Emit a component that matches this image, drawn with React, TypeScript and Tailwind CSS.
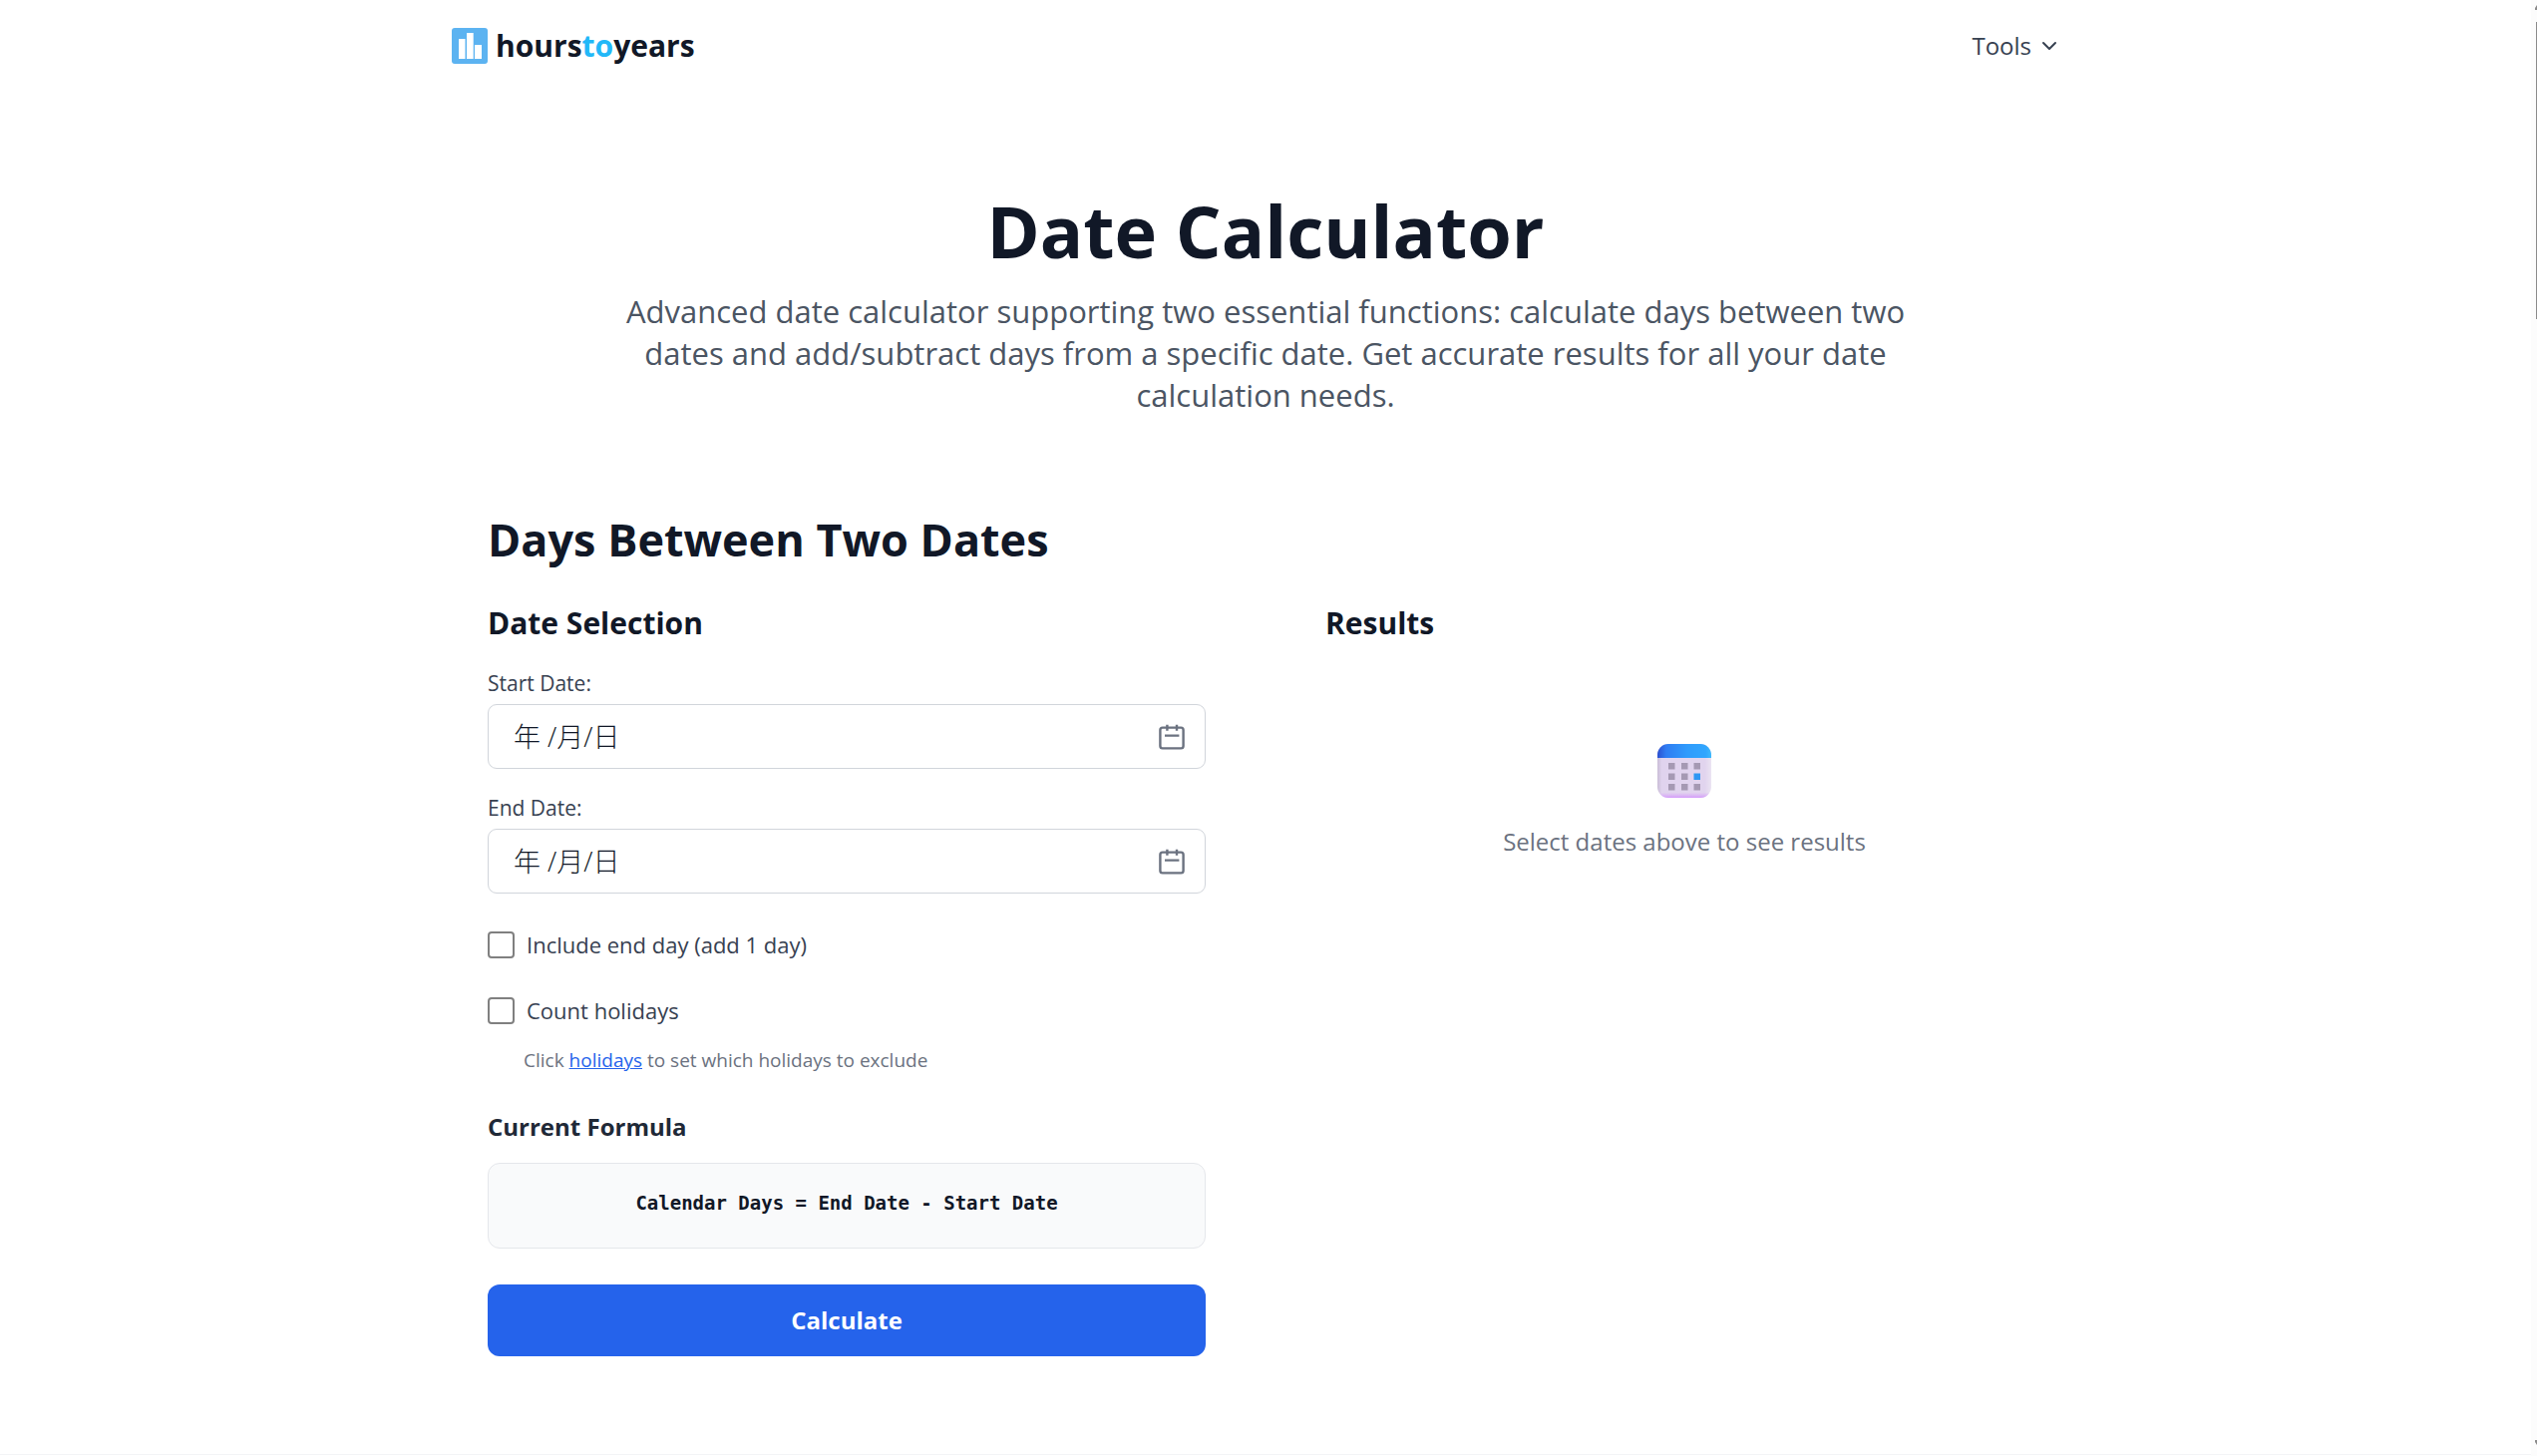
import { useState } from 'react'
import { ChevronDown } from 'lucide-react'

const LogoIcon = () => (
    <svg width="36" height="36" viewBox="0 0 36 36" aria-hidden="true">
        <rect width="36" height="36" rx="3" fill="#5cb3f1" />
        <rect x="7" y="11" width="6.5" height="20" fill="#fff" />
        <rect x="15" y="5" width="6.7" height="26" fill="#fff" />
        <rect x="23" y="17" width="7" height="14" fill="#fff" />
    </svg>
)

const DateFieldIcon = () => (
    <svg width="26" height="26" viewBox="0 0 26 26" fill="none" stroke="#6b7280" strokeWidth="2.4" aria-hidden="true">
        <rect x="1.4" y="3.6" width="23.2" height="20.8" rx="2.4" />
        <path d="M8.4 0.8v6M18 0.8v6M6 11.6h14.4" />
    </svg>
)

const dots = [
    [11, 19], [24, 19], [36.5, 19],
    [11, 29.5], [24, 29.5],
    [11, 40], [24, 40], [36.5, 40],
]

const CalendarIcon = () => (
    <svg width="54" height="54" viewBox="0 0 54 54" aria-hidden="true">
        <defs>
            <linearGradient id="page" x1="0" x2="1" y1="0" y2="0">
                <stop offset="0" stopColor="#c9bdd6" />
                <stop offset="0.08" stopColor="#e0d3ee" />
                <stop offset="0.88" stopColor="#e1d4ee" />
                <stop offset="1" stopColor="#ebe4f2" />
            </linearGradient>
            <linearGradient id="glow" x1="0" x2="0" y1="0" y2="1">
                <stop offset="0.9" stopColor="#d9a8f8" stopOpacity="0" />
                <stop offset="1" stopColor="#d49bfa" />
            </linearGradient>
            <linearGradient id="head" x1="0" x2="1" y1="0" y2="0">
                <stop offset="0" stopColor="#2c4fd0" />
                <stop offset="0.16" stopColor="#2f7cf2" />
                <stop offset="0.55" stopColor="#2f9bfc" />
                <stop offset="0.9" stopColor="#30a6fe" />
                <stop offset="1" stopColor="#3fb9fb" />
            </linearGradient>
            <clipPath id="sheet">
                <rect width="54" height="54" rx="11" />
            </clipPath>
        </defs>
        <g clipPath="url(#sheet)">
            <rect width="54" height="54" fill="url(#page)" />
            <rect width="54" height="54" fill="url(#glow)" />
            <rect width="54" height="14" fill="url(#head)" />
        </g>
        {dots.map(([x, y]) => (
            <rect key={`${x}-${y}`} x={x} y={y} width="6.5" height="6.5" fill="#a599b3" />
        ))}
        <rect x="36.5" y="29.5" width="6.5" height="6.5" fill="#2f97f3" />
    </svg>
)

const Header = () => (
    <header className="mx-auto flex w-full max-w-[1632px] items-center justify-between py-7 pr-[18px]">
        <a href="#" className="flex items-center gap-2">
            <LogoIcon />
            <span className="text-[30px] leading-9 font-bold text-[#111827]">
                hours<span className="text-[#22b8f8]">to</span>years
            </span>
        </a>
        <button type="button" className="flex items-center gap-1.5 text-2xl leading-9 text-[#374151]">
            Tools
            <ChevronDown size={24} strokeWidth={2} />
        </button>
    </header>
)

const DateField = ({ id, label }: { id: string; label: string }) => {
    const [value, setValue] = useState('年 /月/日')

    return (
        <div>
            <label htmlFor={id} className="mb-1.5 block text-[21px] leading-[30px] text-[#374151]">{label}</label>
            <div className="flex h-[65px] items-center rounded-[9px] border border-[#d1d5db] pr-5 pl-[25px]">
                <input
                    id={id}
                    type="text"
                    value={value}
                    onChange={(e) => setValue(e.target.value)}
                    className="min-w-0 flex-1 pt-0.5 text-[27px] font-light text-[#111827] outline-none"
                />
                <DateFieldIcon />
            </div>
        </div>
    )
}

const CheckField = ({ label }: { label: string }) => (
    <label className="flex items-center gap-3 text-[22px] leading-[33px] text-[#374151]">
        <input type="checkbox" className="size-[27px] appearance-none rounded-[4px] border-2 border-[#808080] bg-white checked:bg-[#2563eb]" />
        {label}
    </label>
)

const Calculator = () => (
    <section className="mx-auto mt-[97px] w-full max-w-[1560px]">
        <h2 className="text-[45px] leading-[54px] font-bold text-[#111827]">Days Between Two Dates</h2>
        <div className="mt-9 grid grid-cols-2 gap-[120px]">
            <form onSubmit={(e) => e.preventDefault()}>
                <h3 className="text-[30px] leading-[42px] font-bold text-[#111827]">Date Selection</h3>
                <div className="mt-6 flex flex-col gap-6">
                    <DateField id="start-date" label="Start Date:" />
                    <DateField id="end-date" label="End Date:" />
                </div>
                <div className="mt-[35px] flex flex-col gap-[33px]">
                    <CheckField label="Include end day (add 1 day)" />
                    <CheckField label="Count holidays" />
                </div>
                <p className="mt-[21px] pl-9 text-[19px] leading-6 text-[#6b7280]">
                    Click <a href="#" className="text-[#2563eb] underline">holidays</a> to set which holidays to exclude
                </p>
                <h4 className="mt-[37px] text-2xl leading-9 font-bold text-[#1f2937]">Current Formula</h4>
                <div className="mt-[18px] rounded-xl border border-[#e5e7eb] bg-[#f9fafb] px-6 pt-6 pb-[30px] text-center">
                    <code className="block font-['DejaVu_Sans_Mono',monospace] text-[19px] leading-[30px] font-bold text-[#111827]">
                        Calendar Days = End Date - Start Date
                    </code>
                </div>
                <button type="submit" className="mt-9 h-[72px] w-full rounded-xl bg-[#2563eb] text-2xl font-bold text-white">
                    Calculate
                </button>
            </form>
            <div>
                <h3 className="text-[30px] leading-[42px] font-bold text-[#111827]">Results</h3>
                <div className="mt-[100px] flex flex-col items-center gap-[26px]">
                    <CalendarIcon />
                    <p className="text-2xl leading-9 text-[#6b7280]">Select dates above to see results</p>
                </div>
            </div>
        </div>
    </section>
)

const ScrollTrack = () => (
    <div className="flex w-1.5 flex-col items-end bg-[#fcfcfc] pt-[5px] pb-[11px]">
        <svg width="2" height="5" viewBox="0 0 2 5" fill="#8b8b8b" aria-hidden="true">
            <path d="M2 0v5H0V3z" />
        </svg>
        <div className="mt-3 h-[298px] w-px bg-[#8b8b8b]" />
        <svg className="mt-auto" width="2" height="5" viewBox="0 0 2 5" fill="#8b8b8b" aria-hidden="true">
            <path d="M2 5V0H0v2z" />
        </svg>
    </div>
)

const App = () => (
    <div className="flex min-h-screen bg-white font-['Open_Sans','Noto_Sans_CJK_SC',sans-serif]">
        <div className="min-w-0 flex-1">
            <Header />
            <main className="border-b border-[#f3f4f6] pb-[98px]">
                <div className="mx-auto mt-[103px] max-w-[1344px] text-center">
                    <h1 className="text-[72px] leading-[72px] font-bold text-[#111827]">Date Calculator</h1>
                    <p className="mt-6 text-[31px] leading-[42px] text-[#4b5563]">
                        Advanced date calculator supporting two essential functions: calculate days between two dates and
                        add/subtract days from a specific date. Get accurate results for all your date calculation needs.
                    </p>
                </div>
                <Calculator />
            </main>
        </div>
        <ScrollTrack />
    </div>
)

export default App
